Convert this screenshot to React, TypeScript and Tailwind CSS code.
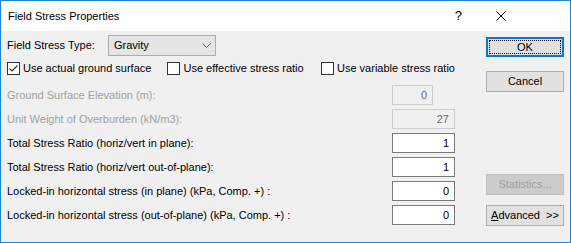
import { ReactNode } from "react";

const font = { fontFamily: '"Liberation Sans", Arial, sans-serif' };

const Checkbox = ({ checked, label }: { checked?: boolean; label: string }) => (
  <label className="flex items-center gap-[3px] whitespace-nowrap">
    <span className="w-[13px] h-[13px] border border-[#333333] bg-white flex items-center justify-center">
      {checked && (
        <svg width="11" height="11" viewBox="0 0 11 11">
          <path d="M1.5 5.5 L4 8 L9.5 2.5" fill="none" stroke="#333333" strokeWidth="1.2" />
        </svg>
      )}
    </span>
    <span>{label}</span>
  </label>
);

const Field = ({
  label,
  value,
  disabled,
  narrow,
}: {
  label: string;
  value: string;
  disabled?: boolean;
  narrow?: boolean;
}) => (
  <div className="flex items-center h-[20px]">
    <div className={`w-[385px] whitespace-nowrap ${disabled ? "text-[#a0a0a0]" : "text-black"}`}>{label}</div>
    <div
      className={`h-[20px] ${narrow ? "w-[41px]" : "w-[63px]"} border flex items-center justify-end pr-[5px] ${
        disabled ? "border-[#cccccc] bg-[#f0f0f0] text-[#6d6d6d]" : "border-[#7a7a7a] bg-white text-black"
      }`}
    >
      {value}
    </div>
  </div>
);

const Button = ({
  children,
  className,
}: {
  children: ReactNode;
  className?: string;
}) => (
  <div
    className={`w-[78px] h-[21px] border flex items-center justify-center whitespace-nowrap ${
      className ?? "border-[#adadad] bg-[#e1e1e1]"
    }`}
  >
    {children}
  </div>
);

export default function App() {
  return (
    <div
      className="w-[571px] h-[243px] border border-[#1883d7] bg-[#f0f0f0] flex flex-col text-[11px] text-black"
      style={font}
    >
      <div className="h-[30px] bg-white flex items-center pl-[7px]">
        <span className="text-[11px]">Field Stress Properties</span>
        <span className="ml-auto mr-[34px] text-[13px]">?</span>
        <svg width="10" height="10" viewBox="0 0 10 10" className="mr-[64px]">
          <path d="M0.5 0.5 L9.5 9.5 M9.5 0.5 L0.5 9.5" stroke="#000" strokeWidth="1" />
        </svg>
      </div>
      <div className="flex flex-1">
        <div className="w-[454px] shrink-0 pl-[6px] pt-[4px] flex flex-col">
          <div className="flex items-center h-[21px]">
            <span className="w-[101px]">Field Stress Type:</span>
            <div className="w-[108px] h-[21px] border border-[#acacac] bg-[#e5e5e5] flex items-center pl-[5px] pr-[4px]">
              <span>Gravity</span>
              <svg width="9" height="6" viewBox="0 0 9 6" className="ml-auto">
                <path d="M0.5 0.5 L4.5 4.5 L8.5 0.5" fill="none" stroke="#606060" strokeWidth="1" />
              </svg>
            </div>
          </div>
          <div className="flex items-center h-[13px] mt-[6px]">
            <div className="w-[163px]">
              <Checkbox checked label="Use actual ground surface" />
            </div>
            <div className="w-[156px]">
              <Checkbox label="Use effective stress ratio" />
            </div>
            <Checkbox label="Use variable stress ratio" />
          </div>
          <div className="flex flex-col gap-[4px] mt-[10px]">
            <Field label="Ground Surface Elevation (m):" value="0" disabled narrow />
            <Field label="Unit Weight of Overburden (kN/m3):" value="27" disabled />
            <Field label="Total Stress Ratio (horiz/vert in plane):" value="1" />
            <Field label="Total Stress Ratio (horiz/vert out-of-plane):" value="1" />
            <Field label="Locked-in horizontal stress (in plane) (kPa, Comp. +) :" value="0" />
            <Field label="Locked-in horizontal stress (out-of-plane) (kPa, Comp. +) :" value="0" />
          </div>
        </div>
        <div className="ml-[31px] pt-[6px] flex flex-col">
          <div className="w-[78px] h-[20px] border-2 border-[#0078d7] bg-[#e1e1e1] p-[1px]">
            <div className="w-full h-full border border-dotted border-black flex items-center justify-center">
              OK
            </div>
          </div>
          <Button className="mt-[14px] border-[#adadad] bg-[#e1e1e1]">Cancel</Button>
          <Button className="mt-[82px] bg-[#cccccc] border-[#bfbfbf] text-[#a0a0a0]">Statistics...</Button>
          <Button className="mt-[10px] border-[#adadad] bg-[#e1e1e1]">
            <span>
              <span className="underline">A</span>dvanced &nbsp;&gt;&gt;
            </span>
          </Button>
        </div>
      </div>
    </div>
  );
}
